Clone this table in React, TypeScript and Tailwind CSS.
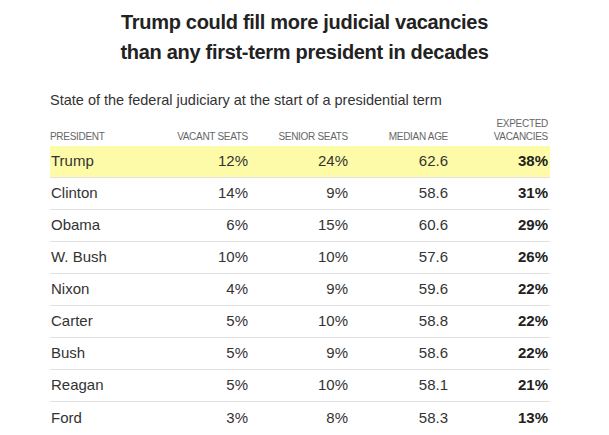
const rows = [
  { name: "Trump", vacant: "12%", senior: "24%", age: "62.6", expected: "38%" },
  { name: "Clinton", vacant: "14%", senior: "9%", age: "58.6", expected: "31%" },
  { name: "Obama", vacant: "6%", senior: "15%", age: "60.6", expected: "29%" },
  { name: "W. Bush", vacant: "10%", senior: "10%", age: "57.6", expected: "26%" },
  { name: "Nixon", vacant: "4%", senior: "9%", age: "59.6", expected: "22%" },
  { name: "Carter", vacant: "5%", senior: "10%", age: "58.8", expected: "22%" },
  { name: "Bush", vacant: "5%", senior: "9%", age: "58.6", expected: "22%" },
  { name: "Reagan", vacant: "5%", senior: "10%", age: "58.1", expected: "21%" },
  { name: "Ford", vacant: "3%", senior: "8%", age: "58.3", expected: "13%" },
];

export default function App() {
  return (
    <div className="w-[609px] h-[435px] bg-white text-[#333] font-['Liberation_Sans',Arial,sans-serif] overflow-hidden">
      <h1 className="pt-[7px] text-center text-[20px] leading-[30px] font-bold text-[#222] tracking-[-0.3px]">
        Trump could fill more judicial vacancies
        <br />
        than any first-term president in decades
      </h1>

      <p className="mt-[23px] ml-[50px] text-[14.5px] leading-[20px] text-[#333]">
        State of the federal judiciary at the start of a presidential term
      </p>

      <div className="ml-[50px] w-[500px]">
        <div className="mt-[7px] grid grid-cols-[100px_100px_100px_100px_100px] items-end pb-[3px] text-[10px] leading-[13px] text-[#666] uppercase tracking-[-0.3px]">
          <div>President</div>
          <div className="text-right pr-[2px]">Vacant seats</div>
          <div className="text-right pr-[2px]">Senior seats</div>
          <div className="text-right pr-[2px]">Median age</div>
          <div className="text-right pr-[2px]">
            Expected
            <br />
            vacancies
          </div>
        </div>

        {rows.map((r, i) => (
          <div
            key={r.name}
            className={
              "grid grid-cols-[100px_100px_100px_100px_100px] items-center h-[32px] text-[15px] border-b border-[#e2e2e2] last:border-b-0 " +
              (i === 0 ? "bg-[#fdfba8]" : "")
            }
          >
            <div className="pl-[1px]">{r.name}</div>
            <div className="text-right pr-[2px]">{r.vacant}</div>
            <div className="text-right pr-[2px]">{r.senior}</div>
            <div className="text-right pr-[2px]">{r.age}</div>
            <div className="text-right pr-[2px] font-bold text-[#222]">{r.expected}</div>
          </div>
        ))}
      </div>
    </div>
  );
}
